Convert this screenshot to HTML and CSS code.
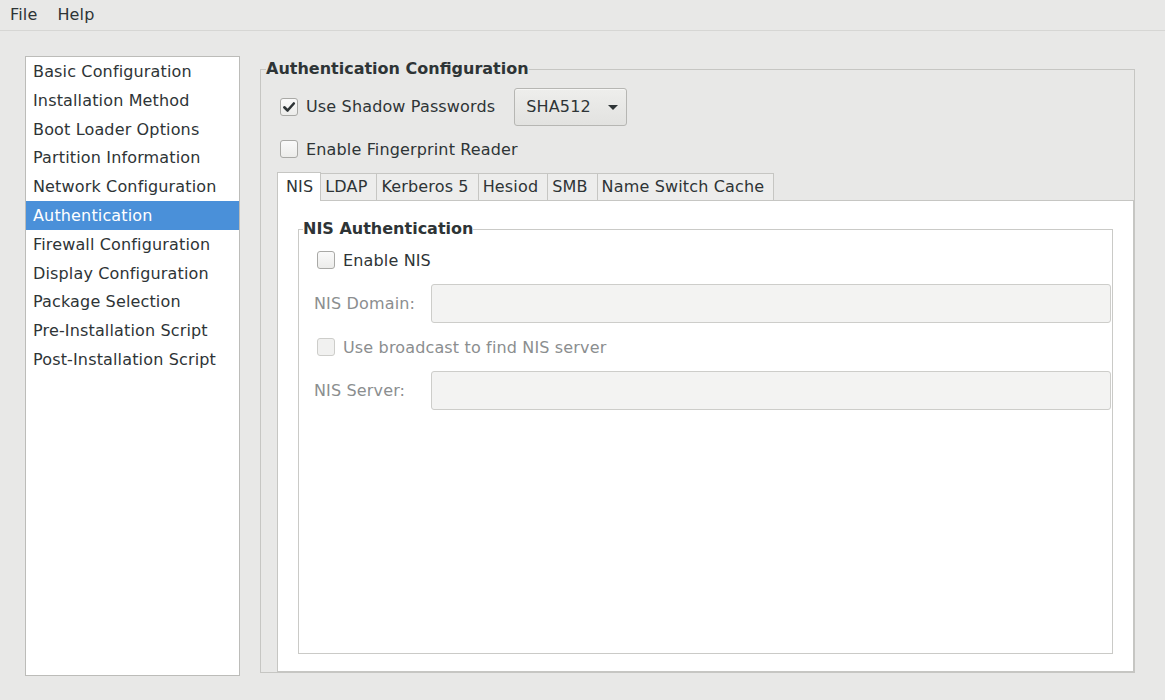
FILE: index.html
```html
<!DOCTYPE html>
<html>
<head>
<meta charset="utf-8">
<title>Kickstart</title>
<link rel="stylesheet" href="styles.css">
</head>
<body>
<div class="menubar">
  <span class="menu">File</span>
  <span class="menu">Help</span>
</div>
<div class="main">
  <ul class="sidebar">
    <li>Basic Configuration</li>
    <li>Installation Method</li>
    <li>Boot Loader Options</li>
    <li>Partition Information</li>
    <li>Network Configuration</li>
    <li class="selected">Authentication</li>
    <li>Firewall Configuration</li>
    <li>Display Configuration</li>
    <li>Package Selection</li>
    <li>Pre-Installation Script</li>
    <li>Post-Installation Script</li>
  </ul>
  <fieldset class="frame outer">
    <legend>Authentication Configuration</legend>
    <div class="row shadow-row">
      <span class="check checked"><svg viewBox="0 0 16 16" width="16" height="16"><path d="M3.3 8.3 L6.6 11.5 L12.8 4.5" fill="none" stroke="#2e3436" stroke-width="2.6" stroke-linecap="round" stroke-linejoin="round"/></svg></span>
      <span class="label">Use Shadow Passwords</span>
      <button class="combo"><span>SHA512</span><span class="arrow"></span></button>
    </div>
    <div class="row finger-row">
      <span class="check"></span>
      <span class="label">Enable Fingerprint Reader</span>
    </div>
    <div class="notebook">
      <div class="tabs">
        <span class="tab active">NIS</span>
        <span class="tab">LDAP</span>
        <span class="tab">Kerberos 5</span>
        <span class="tab">Hesiod</span>
        <span class="tab">SMB</span>
        <span class="tab">Name Switch Cache</span>
      </div>
      <div class="page">
        <fieldset class="frame inner">
          <legend>NIS Authentication</legend>
          <div class="row nis-row">
            <span class="check"></span>
            <span class="label">Enable NIS</span>
          </div>
          <div class="field-row">
            <span class="field-label">NIS Domain:</span>
            <span class="entry"></span>
          </div>
          <div class="row nis-row disabled">
            <span class="check"></span>
            <span class="label">Use broadcast to find NIS server</span>
          </div>
          <div class="field-row">
            <span class="field-label">NIS Server:</span>
            <span class="entry"></span>
          </div>
        </fieldset>
      </div>
    </div>
  </fieldset>
</div>
</body>
</html>
```

FILE: styles.css
```css
* { box-sizing: border-box; }
html, body {
  margin: 0;
  padding: 0;
  width: 1165px;
  height: 700px;
  overflow: hidden;
  background: #e8e8e7;
  color: #2e3436;
  font-family: "DejaVu Sans", sans-serif;
  font-size: 16px;
  letter-spacing: 0.15px;
}
.menubar {
  height: 31px;
  display: flex;
  align-items: center;
  gap: 20px;
  padding: 0 0 1px 10px;
  border-bottom: 1px solid #d6d6d4;
}
.main {
  display: flex;
  align-items: flex-start;
  padding: 25px 0 0 25px;
}
.sidebar {
  list-style: none;
  margin: 0;
  padding: 0;
  width: 215px;
  height: 620px;
  background: #fff;
  border: 1px solid #bcbcb9;
}
.sidebar li {
  height: 28.8px;
  line-height: 27.8px;
  padding: 1px 0 0 7px;
  white-space: nowrap;
}
.sidebar li.selected {
  background: #4a90d9;
  color: #fff;
}
.frame {
  margin: 0;
  border: 1px solid #c6c6c3;
  min-width: 0;
  display: flex;
  flex-direction: column;
}
.frame legend {
  font-weight: bold;
  padding: 0;
  line-height: 16px;
  margin-left: -11px;
  letter-spacing: 0;
}
.outer {
  width: 875px;
  height: 612px;
  margin: 5px 0 0 20px;
  padding: 11px 0 0 16px;
}
.row {
  display: flex;
  align-items: center;
}
.check {
  width: 18px;
  height: 18px;
  border: 1px solid #a9a9a6;
  border-radius: 3px;
  background: linear-gradient(#fafafa, #ececea);
  display: flex;
  align-items: center;
  justify-content: center;
  flex: none;
  margin-left: 3px;
}
.row .label {
  margin-left: 8px;
}
.shadow-row {
  height: 37px;
}
.combo {
  margin-left: 19px;
  height: 38px;
  width: 113px;
  border: 1px solid #b6b6b3;
  border-radius: 3px;
  background: linear-gradient(#eeeeec, #e2e2e0);
  font: inherit;
  letter-spacing: 0.15px;
  color: #2e3436;
  display: flex;
  align-items: center;
  padding: 0 0 0 11px;
  box-shadow: inset 0 1px #f6f6f5;
}
.arrow {
  width: 0;
  height: 0;
  border-left: 5px solid transparent;
  border-right: 5px solid transparent;
  border-top: 5px solid #2e3436;
  margin-left: 17px;
  margin-top: 2px;
}
.finger-row {
  height: 24px;
  margin-top: 12px;
}
.notebook {
  flex: 1;
  margin-top: 11px;
  display: flex;
  flex-direction: column;
}
.tabs {
  display: flex;
  align-items: flex-end;
  height: 28px;
  position: relative;
  z-index: 1;
}
.tab {
  height: 27px;
  line-height: 25px;
  padding: 0 9px 0 4px;
  border: 1px solid #c6c6c3;
  border-bottom: none;
  background: #ededec;
  margin-left: -1px;
  white-space: nowrap;
}
.tab.active {
  margin-left: 0;
  height: 29px;
  line-height: 27px;
  padding: 0 7px 0 8px;
  background: #fff;
  margin-bottom: -1px;
}
.page {
  flex: 1;
  background: #fff;
  border: 1px solid #c6c6c3;
  padding: 20px 20px 17px 20px;
  display: flex;
  flex-direction: column;
}
.inner {
  flex: 1;
  padding: 11px 1px 0 15px;
  border-color: #cacac7;
}
.nis-row {
  height: 24px;
}
.field-row {
  display: flex;
  align-items: center;
  margin-top: 12px;
  margin-bottom: 12px;
}
.field-label {
  width: 117px;
  flex: none;
  color: #8b8e8f;
}
.entry {
  flex: 1;
  height: 39px;
  border: 1px solid #cdcdca;
  border-radius: 3px;
  background: #f3f3f2;
}
.disabled .label { color: #8b8e8f; }
.disabled .check {
  background: #f1f1f0;
  border-color: #cdcdca;
}
```
